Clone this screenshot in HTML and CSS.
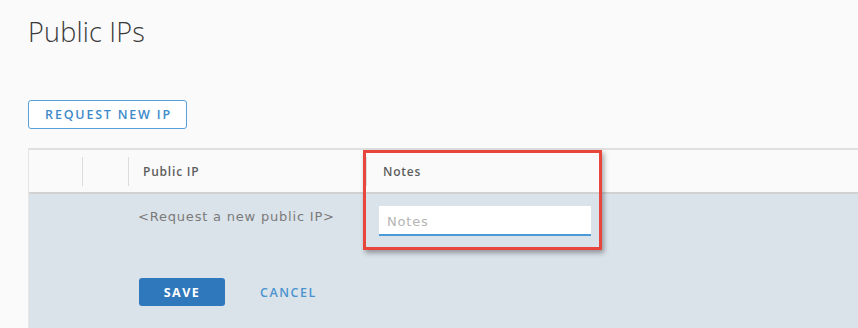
FILE: index.html
```html
<!DOCTYPE html>
<html lang="en">
<head>
    <meta charset="UTF-8">
    <meta name="viewport" content="width=device-width, initial-scale=1.0">
    <title>Public IPs</title>
    <link rel="stylesheet" href="styles.css">
</head>
<body>
    <main class="page">
        <h1 class="title">Public IPs</h1>

        <button class="btn-outline">Request new IP</button>

        <div class="datagrid">
            <div class="row head">
                <div class="cell"></div>
                <div class="cell sep"></div>
                <div class="cell sep">Public IP</div>
                <div class="cell sep notes">Notes</div>
            </div>
            <div class="edit">
                <div class="row">
                    <div class="cell"></div>
                    <div class="cell"></div>
                    <div class="cell ip-hint">&lt;Request a new public IP&gt;</div>
                    <div class="cell notes-input">
                        <input type="text" placeholder="Notes">
                    </div>
                </div>
                <div class="actions">
                    <button class="btn-primary">Save</button>
                    <button class="btn-link">Cancel</button>
                </div>
            </div>
            <span class="highlight"></span>
        </div>
    </main>
</body>
</html>
```

FILE: styles.css
```css
*, *::before, *::after {
    box-sizing: border-box;
}
body {
    margin: 0;
    background: #fafafa;
    font-family: "Open Sans", "Liberation Sans", sans-serif;
    color: #565656;
    overflow: hidden;
}
.page {
    padding: 14px 0 0 28px;
    height: 328px;
}
.title {
    margin: 0;
    font-size: 27px;
    font-weight: 300;
    line-height: 36px;
    color: #3a3a3a;
    letter-spacing: 0.2px;
}
button {
    font-family: inherit;
    text-transform: uppercase;
    cursor: pointer;
}
.btn-outline {
    margin-top: 50px;
    width: 159px;
    height: 29px;
    padding: 0 0 0 2px;
    background: #fff;
    border: 1.5px solid #5a9fd8;
    border-radius: 3px;
    color: #3d8ac9;
    font-size: 12.5px;
    font-weight: 600;
    letter-spacing: 1.8px;
}
/*--------- GRID -------------*/
.datagrid {
    position: relative;
    margin-top: 19px;
    border-top: 2px solid #e0e0e0;
    border-left: 1px solid #e6e6e6;
}
.row {
    display: grid;
    grid-template-columns: 53px 46px 238px 1fr;
}
.row.head {
    height: 44px;
    align-items: center;
    background: #fafafa;
    border-bottom: 2px solid #d2d2d2;
}
.head .cell {
    height: 29px;
    display: flex;
    align-items: center;
    font-size: 12px;
    font-weight: 600;
    letter-spacing: 0.8px;
    color: #5e5e5e;
}
.head .sep {
    border-left: 1px solid #dcdcdc;
    padding-left: 14px;
}
.head .notes {
    padding-left: 16px;
}
.edit {
    background: #dbe3ea;
    height: 140px;
    padding-top: 12px;
}
.ip-hint {
    padding: 3px 0 0 10px;
    font-family: "DejaVu Sans", sans-serif;
    font-size: 13px;
    letter-spacing: 0.8px;
    color: #7a7a7a;
}
.notes-input {
    padding-left: 13px;
}
.notes-input input {
    width: 212px;
    height: 30px;
    border: none;
    border-bottom: 2px solid #4a9ad8;
    outline: none;
    background: #fff;
    padding: 2px 8px 0;
    font-family: "DejaVu Sans", sans-serif;
    font-size: 13px;
    letter-spacing: 0.8px;
}
.notes-input input::placeholder {
    color: #b4b4b4;
}
.actions {
    display: flex;
    align-items: center;
    gap: 35px;
    padding: 42px 0 0 110px;
}
.btn-primary {
    width: 86px;
    height: 28px;
    border: none;
    border-radius: 3px;
    background: #2f78bb;
    color: #fff;
    font-size: 12.5px;
    font-weight: 700;
    letter-spacing: 1.5px;
}
.btn-link {
    padding: 0;
    border: none;
    background: none;
    color: #4a93cf;
    font-size: 12.5px;
    font-weight: 600;
    letter-spacing: 1.5px;
}
/* red callout drawn over the notes column */
.highlight {
    position: absolute;
    left: 334px;
    top: 0;
    width: 239px;
    height: 100px;
    border: 3px solid #e8453c;
    box-shadow: 2px 3px 5px rgba(0, 0, 0, 0.35);
    pointer-events: none;
}
```
